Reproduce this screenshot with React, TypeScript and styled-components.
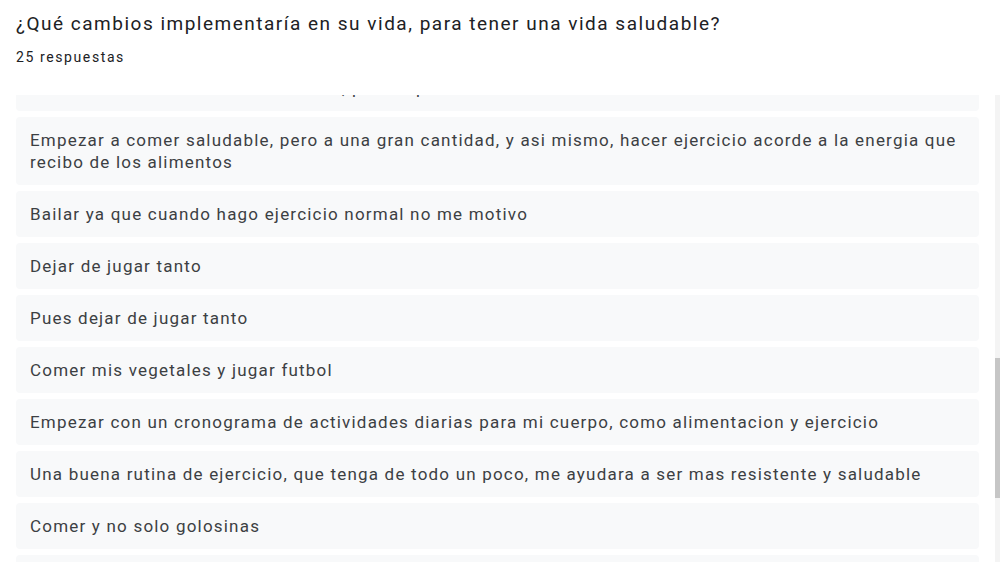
import React from "react";
import styled, { createGlobalStyle } from "styled-components";

const GlobalStyle = createGlobalStyle`
  html, body { margin: 0; padding: 0; background: #ffffff; }
  body { font-family: Roboto, "Liberation Sans", Arial, sans-serif; width: 1000px; height: 580px; overflow: hidden; }
`;

const Page = styled.div`
  display: flex;
  flex-direction: column;
  width: 1000px;
  height: 580px;
`;

const Header = styled.div`
  display: flex;
  flex-direction: column;
  padding: 12px 0 0 16px;
`;

const Title = styled.div`
  font-size: 19px;
  line-height: 24px;
  color: #202124;
  letter-spacing: 1.5px;
  white-space: nowrap;
`;

const Count = styled.div`
  margin-top: 13px;
  font-size: 14px;
  line-height: 16px;
  color: #202124;
  letter-spacing: 1.6px;
`;

const ListArea = styled.div`
  display: flex;
  flex-direction: row;
  height: 467px;
  margin-top: 30px;
`;

const Viewport = styled.div`
  flex: 1;
  overflow: hidden;
  padding-left: 16px;
`;

const List = styled.div<{ $offset: number }>`
  display: flex;
  flex-direction: column;
  gap: 6px;
  margin-top: ${(p) => -p.$offset}px;
`;

const Card = styled.div`
  background: #f8f9fa;
  border-radius: 4px;
  padding: 12px 14px;
  font-size: 17px;
  line-height: 22px;
  letter-spacing: 1.2px;
  color: #3c4043;
`;

const Track = styled.div`
  width: 5px;
  margin-left: 16px;
  background: #f4f4f4;
  display: flex;
  flex-direction: column;
`;

const Thumb = styled.div<{ $top: number; $height: number }>`
  margin-top: ${(p) => p.$top}px;
  height: ${(p) => p.$height}px;
  background: #c6c6c6;
`;

const answers = [
  "Dormir mas horas e hidratarme bien, poco a poco",
  "Empezar a comer saludable, pero a una gran cantidad, y asi mismo, hacer ejercicio acorde a la energia que recibo de los alimentos",
  "Bailar ya que cuando hago ejercicio normal no me motivo",
  "Dejar de jugar tanto",
  "Pues dejar de jugar tanto",
  "Comer mis vegetales y jugar futbol",
  "Empezar con un cronograma de actividades diarias para mi cuerpo, como alimentacion y ejercicio",
  "Una buena rutina de ejercicio, que tenga de todo un poco, me ayudara a ser mas resistente y saludable",
  "Comer y no solo golosinas",
  "Dormir mejor",
];

export default function App() {
  return (
    <>
      <GlobalStyle />
      <Page>
        <Header>
          <Title>¿Qué cambios implementaría en su vida, para tener una vida saludable?</Title>
          <Count>25 respuestas</Count>
        </Header>
        <ListArea>
          <Viewport>
            <List $offset={30}>
              {answers.map((a, i) => (
                <Card key={i}>{a}</Card>
              ))}
            </List>
          </Viewport>
          <Track>
            <Thumb $top={263} $height={140} />
          </Track>
        </ListArea>
      </Page>
    </>
  );
}
